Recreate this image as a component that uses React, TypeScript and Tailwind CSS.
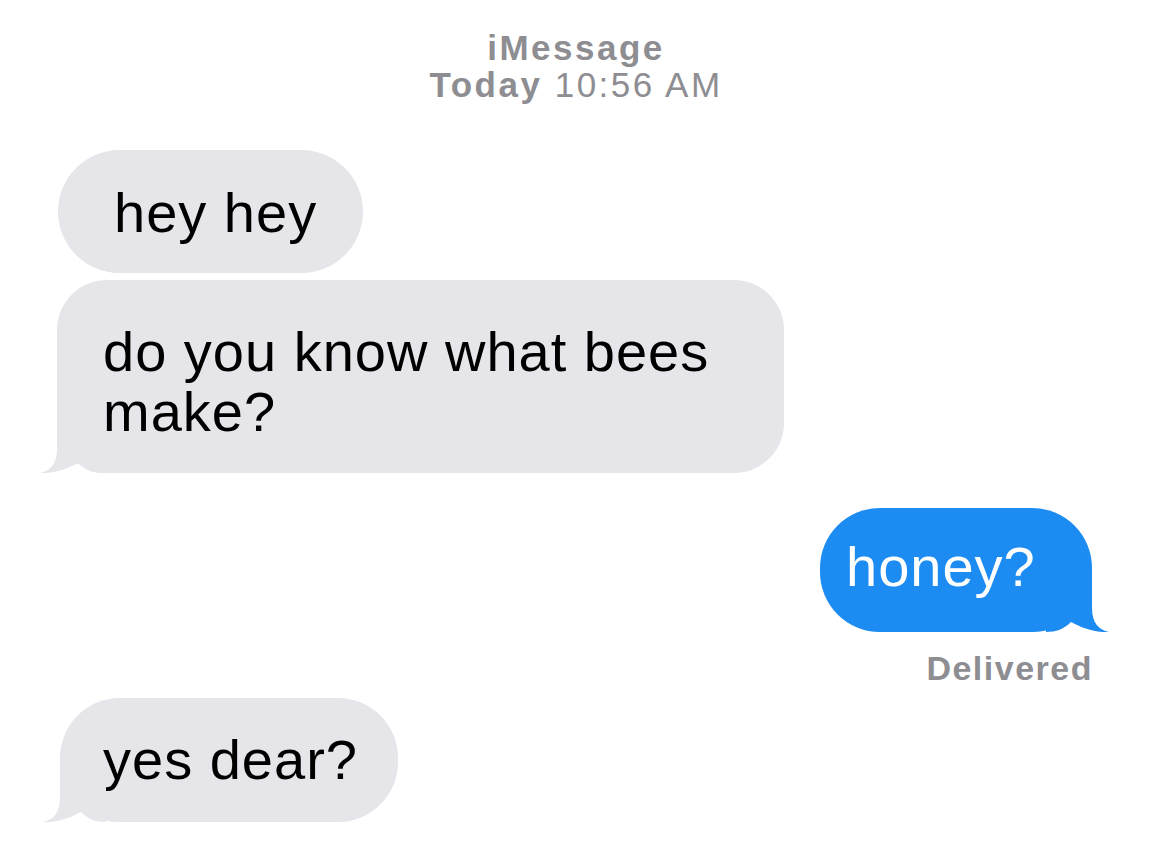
import React from "react";

const GRAY = "#e5e5ea";
const BLUE = "#1c8cf2";

function TailLeft({ color }: { color: string }) {
    return (
        <svg
            className="absolute bottom-0 -left-[17px]"
            width={63}
            height={60}
            viewBox="-17 -60 63 60"
        >
            <path
                d="M 0 -60 L 0 -24 C 0 -9 -7 -2 -17 0 C -4 1 10 -4 21 -10 C 28 -3 36 0 46 0 L 46 -60 Z"
                fill={color}
            />
        </svg>
    );
}

function TailRight({ color }: { color: string }) {
    return (
        <svg
            className="absolute bottom-0 -right-[17px]"
            width={63}
            height={60}
            viewBox="-46 -60 63 60"
        >
            <path
                d="M 0 -60 L 0 -24 C 0 -9 7 -2 17 0 C 4 1 -10 -4 -21 -10 C -28 -3 -36 0 -46 0 L -46 -60 Z"
                fill={color}
            />
        </svg>
    );
}

export default function App() {
    return (
        <div
            className="w-full min-h-screen bg-white flex flex-col antialiased"
            style={{ fontFamily: '"Liberation Sans", Arial, sans-serif' }}
        >
            {/* header */}
            <div className="pt-[29px] text-center text-[35px] leading-[37px] tracking-[2.5px] text-[#8d8d92]">
                <div className="font-bold">iMessage</div>
                <div>
                    <span className="font-bold">Today</span> 10:56 AM
                </div>
            </div>

            <div className="text-[56px] leading-[60px] tracking-[1px] text-black flex flex-col">
                {/* hey hey */}
                <div className="self-start ml-[58px] mt-[47px] rounded-full bg-[#e5e5ea] pl-[56px] pr-[46px] pt-[33px] pb-[30px]">
                    hey hey
                </div>

                {/* do you know */}
                <div className="relative self-start ml-[57px] mt-[7px] w-[727px] rounded-[50px] bg-[#e5e5ea] pl-[46px] pr-[60px] pt-[42px] pb-[31px]">
                    do you know what bees make?
                    <TailLeft color={GRAY} />
                </div>

                {/* honey */}
                <div className="relative self-end mr-[60px] mt-[35px] w-[272px] rounded-[60px] bg-[#1c8cf2] pl-[26px] pt-[29px] pb-[35px] text-white">
                    honey?
                    <TailRight color={BLUE} />
                </div>

                <div className="self-end mr-[59px] mt-[18px] text-[34px] leading-[36px] tracking-[1.5px] font-bold text-[#8d8d92]">
                    Delivered
                </div>

                {/* yes dear */}
                <div className="relative self-start ml-[60px] mt-[12px] rounded-[60px] bg-[#e5e5ea] pl-[43px] pr-[40px] pt-[32px] pb-[32px]">
                    yes dear?
                    <TailLeft color={GRAY} />
                </div>
            </div>
        </div>
    );
}
